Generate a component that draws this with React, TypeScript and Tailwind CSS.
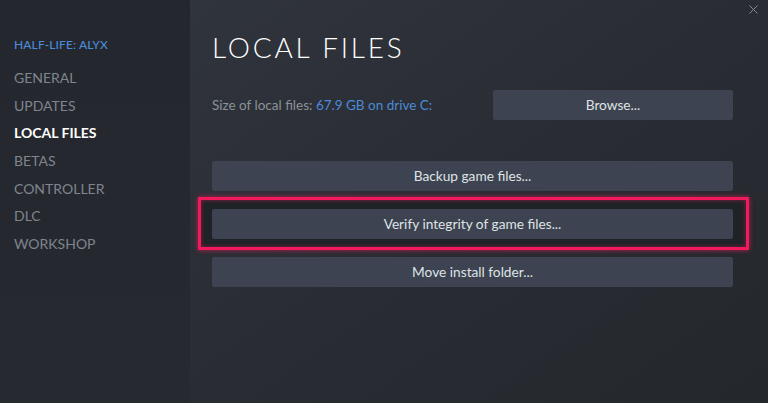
import * as React from 'react'
import { X } from 'lucide-react'

const navItems = ['GENERAL', 'UPDATES', 'LOCAL FILES', 'BETAS', 'CONTROLLER', 'DLC', 'WORKSHOP']

function ActionButton({ label, className = 'w-full' }: { label: string; className?: string }): React.JSX.Element {
  return (
    <button
      className={`flex h-[30px] items-center justify-center rounded-[2px] bg-[#3d4350] text-[13.7px] text-[#dfe3e6] ${className}`}
    >
      {label}
    </button>
  )
}

export default function App(): React.JSX.Element {
  return (
    <div
      className="relative flex h-[403px] w-[768px] overflow-hidden bg-[#24272d]"
      style={{ fontFamily: 'Lato, "Noto Sans", sans-serif' }}
    >
      {/* Sidebar */}
      <aside className="flex w-[190px] shrink-0 flex-col bg-gradient-to-b from-[#24272d] to-[#262a30] pl-[14px] pt-[36px]">
        <div className="text-[12px] font-medium tracking-[0.01em] text-[#4b8bd8]">HALF-LIFE: ALYX</div>
        <nav className="mt-[14px] flex flex-col">
          {navItems.map((item) => (
            <div
              key={item}
              className={`h-[27.7px] text-[14px] leading-[20px] ${
                item === 'LOCAL FILES' ? 'font-bold text-white' : 'text-[#7f858e]'
              }`}
            >
              {item}
            </div>
          ))}
        </nav>
      </aside>

      {/* Main panel */}
      <main className="relative flex flex-1 flex-col bg-gradient-to-br from-[#30343c] via-[#292c33] to-[#24272c] pl-[22px] pr-[35px] pt-[28px]">
        <button className="absolute right-[7px] top-[2px] text-[#8b9098]">
          <X className="size-[15px]" strokeWidth={1.5} />
        </button>

        <h1 className="text-[28px] font-light leading-[38px] tracking-[0.1em] text-white">LOCAL FILES</h1>

        <div className="mt-[24px] flex items-center">
          <div className="flex-1 whitespace-nowrap text-[13.5px] text-[#8b929a]">
            Size of local files: <span className="text-[#4b8bd8]">67.9 GB on drive C:</span>
          </div>
          <ActionButton label="Browse..." className="w-[240px] shrink-0" />
        </div>

        <div className="mt-[41px] flex flex-col gap-[18px]">
          <ActionButton label="Backup game files..." />
          <div className="relative">
            <div className="pointer-events-none absolute -bottom-[11px] -left-[14px] -right-[16px] -top-[12px] border-[3px] border-[#f2195c] bg-[#1f2227] shadow-[0_0_5px_rgba(242,25,92,0.7),inset_0_0_4px_rgba(242,25,92,0.5)]" />
            <ActionButton label="Verify integrity of game files..." className="relative w-full" />
          </div>
          <ActionButton label="Move install folder..." />
        </div>
      </main>
    </div>
  )
}
